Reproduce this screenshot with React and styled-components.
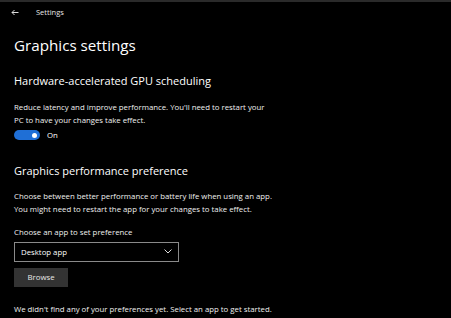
import React from "react";
import styled, { createGlobalStyle } from "styled-components";

const GlobalStyle = createGlobalStyle`
  html, body {
    margin: 0;
    padding: 0;
    background: #000;
  }
  body {
    font-family: "Open Sans", "Noto Sans", sans-serif;
    color: #fff;
  }
`;

const Window = styled.div`
  width: 451px;
  height: 318px;
  box-sizing: border-box;
  border-top: 2px solid #2a2a2a;
  background: #000;
  overflow: hidden;
`;

const TitleBar = styled.div`
  display: flex;
  align-items: center;
  height: 20px;
  padding-left: 11px;
  gap: 17px;
  font-size: 7.5px;
  color: #e6e6e6;
`;

const Content = styled.div`
  padding: 0 14px;
  display: flex;
  flex-direction: column;
`;

const PageTitle = styled.h1`
  margin: 11px 0 0;
  font-weight: 400;
  font-size: 15.2px;
  line-height: 24px;
`;

const SectionTitle = styled.h2`
  margin: ${(p) => p.$top}px 0 0;
  font-weight: 400;
  font-size: 11px;
  line-height: 18px;
`;

const Text = styled.p`
  margin: ${(p) => p.$top || 0}px 0 0;
  font-size: 7.8px;
  line-height: 12.5px;
  color: #f0f0f0;
`;

const ToggleRow = styled.div`
  display: flex;
  align-items: center;
  gap: 7px;
  margin-top: 4px;
  height: 10px;
  font-size: 7.8px;
`;

const Switch = styled.div`
  width: 26px;
  height: 10px;
  border-radius: 6px;
  background: #1f6fd6;
  display: flex;
  align-items: center;
  justify-content: flex-end;
  padding-right: 3px;
  box-sizing: border-box;
`;

const Knob = styled.div`
  width: 5px;
  height: 5px;
  border-radius: 50%;
  background: #fff;
`;

const Select = styled.div`
  margin-top: 3px;
  width: 165px;
  height: 20px;
  box-sizing: border-box;
  border: 1px solid #8a8a8a;
  display: flex;
  align-items: center;
  justify-content: space-between;
  padding: 0 6px;
  font-size: 7.8px;
`;

const Button = styled.div`
  margin-top: 6px;
  width: 54px;
  height: 19px;
  background: #333;
  display: flex;
  align-items: center;
  justify-content: center;
  font-size: 7.8px;
  color: #e8e8e8;
`;

export default function App() {
  return (
    <Window>
      <GlobalStyle />
      <TitleBar>
        <svg width="8" height="7" viewBox="0 0 8 7">
          <path d="M7.5 3.5H1M3.5 1L1 3.5 3.5 6" stroke="#ddd" strokeWidth="1" fill="none" />
        </svg>
        <span>Settings</span>
      </TitleBar>
      <Content>
        <PageTitle>Graphics settings</PageTitle>
        <SectionTitle $top={15}>Hardware-accelerated GPU scheduling</SectionTitle>
        <Text $top={11}>
          Reduce latency and improve performance. You'll need to restart your
          <br />
          PC to have your changes take effect.
        </Text>
        <ToggleRow>
          <Switch>
            <Knob />
          </Switch>
          <span>On</span>
        </ToggleRow>
        <SectionTitle $top={22}>Graphics performance preference</SectionTitle>
        <Text $top={10}>
          Choose between better performance or battery life when using an app.
          <br />
          You might need to restart the app for your changes to take effect.
        </Text>
        <Text $top={11}>Choose an app to set preference</Text>
        <Select>
          <span>Desktop app</span>
          <svg width="8" height="5" viewBox="0 0 8 5">
            <path d="M0.5 0.5L4 4l3.5-3.5" stroke="#ddd" strokeWidth="1" fill="none" />
          </svg>
        </Select>
        <Button>Browse</Button>
        <Text $top={16}>
          We didn't find any of your preferences yet. Select an app to get started.
        </Text>
      </Content>
    </Window>
  );
}
